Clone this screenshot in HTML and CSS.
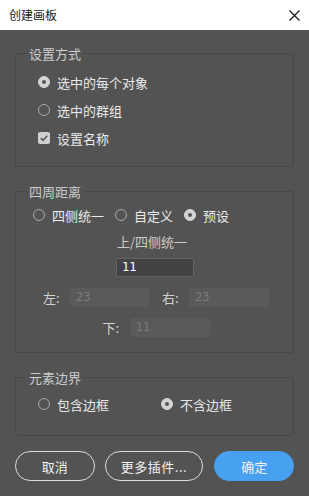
FILE: index.html
```html
<!DOCTYPE html>
<html lang="zh-CN">
<head>
<meta charset="utf-8">
<title>创建画板</title>
<link rel="stylesheet" href="styles.css">
</head>
<body>
<div class="dialog">
  <div class="titlebar">
    <span class="title">创建画板</span>
    <svg class="close" width="11" height="11" viewBox="0 0 11 11"><path d="M0.5 0.5 L10.5 10.5 M10.5 0.5 L0.5 10.5" stroke="#111" stroke-width="1.1" fill="none"/></svg>
  </div>
  <div class="content">
    <fieldset class="group g1">
      <legend>设置方式</legend>
      <div class="stack">
        <label class="opt"><span class="radio on"></span>选中的每个对象</label>
        <label class="opt"><span class="radio"></span>选中的群组</label>
        <label class="opt"><span class="check"><svg width="12" height="12" viewBox="0 0 12 12"><path d="M2.8 6.2 L5 8.3 L9.3 3.8" stroke="#5a5a5a" stroke-width="1.6" fill="none"/></svg></span>设置名称</label>
      </div>
    </fieldset>

    <fieldset class="group g2">
      <legend>四周距离</legend>
      <div class="inline-opts">
        <label class="opt-s"><span class="radio"></span>四侧统一</label>
        <label class="opt-s"><span class="radio"></span>自定义</label>
        <label class="opt-s"><span class="radio on"></span>预设</label>
      </div>
      <div class="top-col">
        <div class="top-label">上/四侧统一</div>
        <div class="field active">11</div>
      </div>
      <div class="pair-row">
        <div class="pair"><span class="plabel">左:</span><div class="field disabled">23</div></div>
        <div class="pair"><span class="plabel">右:</span><div class="field disabled">23</div></div>
      </div>
      <div class="pair-row">
        <div class="pair"><span class="plabel">下:</span><div class="field disabled">11</div></div>
      </div>
    </fieldset>

    <fieldset class="group g3">
      <legend>元素边界</legend>
      <div class="border-opts">
        <label class="opt-s w1"><span class="radio"></span>包含边框</label>
        <label class="opt-s"><span class="radio on"></span>不含边框</label>
      </div>
    </fieldset>

    <div class="buttons">
      <button class="btn b1">取消</button>
      <button class="btn b2">更多插件...</button>
      <button class="btn primary">确定</button>
    </div>
  </div>
</div>
</body>
</html>
```

FILE: styles.css
```css
html, body {
  margin: 0;
  padding: 0;
}
body {
  width: 309px;
  height: 496px;
  background: #535353;
  font-family: "Noto Sans CJK SC", "Noto Sans", sans-serif;
  overflow: hidden;
}
.dialog {
  width: 309px;
  height: 496px;
  background: #535353;
}
.titlebar {
  height: 30px;
  background: #ffffff;
  display: flex;
  align-items: center;
  justify-content: space-between;
  padding: 0 9px 0 9px;
  box-sizing: border-box;
}
.title {
  font-size: 12px;
  color: #1a1a1a;
  line-height: 16px;
}
.close {
  display: block;
}
.content {
  padding: 15px 15px 0 15px;
}
.group {
  margin: 0;
  padding: 0 10px;
  border: 1px solid #484848;
  border-radius: 3px;
  min-width: 0;
}
.group legend {
  padding: 0 3px;
  font-size: 13px;
  line-height: 17px;
  color: #cdcdcd;
}
.g2, .g3 {
  margin-top: 16px;
}
.stack {
  padding: 6px 0 14px 12px;
  display: flex;
  flex-direction: column;
}
.opt {
  height: 28px;
  display: flex;
  align-items: center;
  gap: 7px;
  font-size: 13px;
  color: #eaeaea;
}
.radio {
  width: 12px;
  height: 12px;
  border-radius: 50%;
  border: 1.5px solid #a9a9a9;
  box-sizing: border-box;
  display: inline-block;
  flex: none;
  position: relative;
}
.radio.on {
  background: #d4d4d4;
  border-color: #d4d4d4;
}
.radio.on::after {
  content: "";
  position: absolute;
  width: 4px;
  height: 4px;
  border-radius: 50%;
  background: #555;
  left: 2.5px;
  top: 2.5px;
}
.check {
  width: 12px;
  height: 12px;
  border-radius: 2px;
  background: #cfcfcf;
  display: inline-block;
  flex: none;
}
.check svg {
  display: block;
}
.inline-opts {
  padding: 5px 0 0 7px;
  display: flex;
  gap: 11px;
}
.opt-s {
  height: 20px;
  display: flex;
  align-items: center;
  gap: 7px;
  font-size: 13px;
  color: #eaeaea;
}
.top-col {
  margin-top: 8px;
  display: flex;
  flex-direction: column;
  align-items: flex-start;
  width: 78px;
  margin-left: 90px;
}
.top-label {
  font-size: 13px;
  line-height: 17px;
  color: #cdcdcd;
  margin-left: 1px;
}
.field {
  box-sizing: border-box;
  width: 80px;
  height: 19px;
  font-family: "DejaVu Sans Mono", "Liberation Mono", monospace;
  font-size: 12px;
  line-height: 19px;
  padding-left: 6px;
  border-radius: 2px;
}
.field.active {
  width: 78px;
  margin-top: 8px;
  background: #424242;
  border: 1px solid #646464;
  line-height: 17px;
  color: #ffffff;
  padding-left: 5px;
}
.field.disabled {
  background: #5a5a5a;
  color: #7c7c7c;
}
.pair-row {
  margin-top: 11px;
  display: flex;
  justify-content: center;
  gap: 12px;
  padding-left: 3px;
}
.pair-row:last-child {
  margin-bottom: 15px;
}
.pair {
  display: flex;
  align-items: center;
}
.plabel {
  width: 27px;
  font-size: 13px;
  line-height: 17px;
  color: #d2d2d2;
}
.border-opts {
  padding: 8px 0 21px 12px;
  display: flex;
}
.w1 {
  width: 123px;
}
.buttons {
  margin-top: 15px;
  display: flex;
}
.btn {
  height: 30px;
  box-sizing: border-box;
  border: 1.5px solid #dcdcdc;
  border-radius: 15px;
  background: transparent;
  color: #f2f2f2;
  font-family: "Noto Sans CJK SC", "Noto Sans", sans-serif;
  font-size: 13px;
  padding: 0;
}
.b1 {
  width: 80px;
}
.b2 {
  width: 99px;
  margin-left: 10px;
  letter-spacing: 0.5px;
}
.primary {
  width: 80px;
  margin-left: 11px;
  background: #47a1f0;
  border-color: #47a1f0;
}
```
